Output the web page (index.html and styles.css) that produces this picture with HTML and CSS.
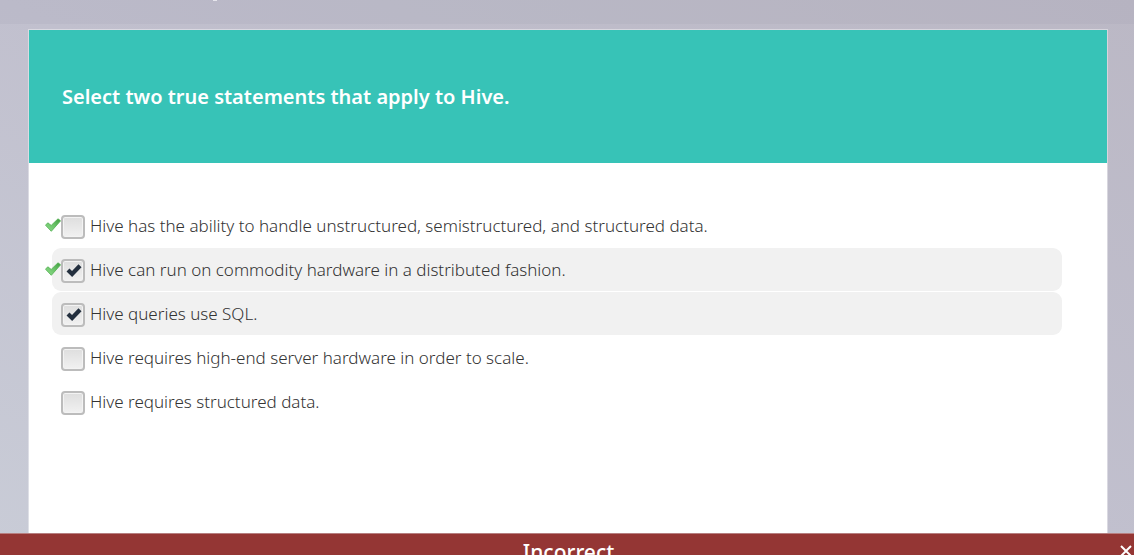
FILE: index.html
```html
<!DOCTYPE html>
<html lang="en">
<head>
<meta charset="utf-8">
<meta name="viewport" content="width=device-width, initial-scale=1">
<title>Hive quiz</title>
<link rel="stylesheet" href="styles.css">
</head>
<body>
<div class="page">
  <header class="topbar"><span class="topbar-mark"></span></header>
  <main class="card">
    <h1 class="question">Select two true statements that apply to Hive.</h1>
    <form class="answers">
      <div class="answer">
        <svg class="correct" viewBox="0 0 16 14" aria-hidden="true"><use href="#tick"/></svg>
        <input class="box" type="checkbox" id="a1"><label class="text" for="a1">Hive has the ability to handle unstructured, semistructured, and structured data.</label>
      </div>
      <div class="answer selected">
        <svg class="correct" viewBox="0 0 16 14" aria-hidden="true"><use href="#tick"/></svg>
        <span class="control"><input class="box" type="checkbox" id="a2" checked><svg class="check" viewBox="0 0 16 14" aria-hidden="true"><use href="#check"/></svg></span><label class="text" for="a2">Hive can run on commodity hardware in a distributed fashion.</label>
      </div>
      <div class="answer selected">
        <span class="control"><input class="box" type="checkbox" id="a3" checked><svg class="check" viewBox="0 0 16 14" aria-hidden="true"><use href="#check"/></svg></span><label class="text" for="a3">Hive queries use SQL.</label>
      </div>
      <div class="answer">
        <input class="box" type="checkbox" id="a4"><label class="text" for="a4">Hive requires high-end server hardware in order to scale.</label>
      </div>
      <div class="answer">
        <input class="box" type="checkbox" id="a5"><label class="text" for="a5">Hive requires structured data.</label>
      </div>
    </form>
  </main>
  <footer class="result">
    <span class="result-text">Incorrect</span>
    <button class="close" type="button" aria-label="Close"><svg class="close-icon" viewBox="0 0 12 12" aria-hidden="true"><path d="M1 1l10 10M11 1L1 11" stroke="#fff" stroke-width="2" fill="none"/></svg></button>
  </footer>
</div>
<svg class="symbols" aria-hidden="true">
  <defs>
    <linearGradient id="green" x1="0" y1="1" x2="1" y2="0">
      <stop offset="0" stop-color="#8fdc8c"/><stop offset="0.5" stop-color="#6cc56a"/><stop offset="1" stop-color="#3f9c3f"/>
    </linearGradient>
  </defs>
  <symbol id="tick" viewBox="0 0 16 14"><path d="M.5 7.2L2.8 4.8l3.4 2.6L13 .8l2.6 2L6.3 13.3z" fill="url(#green)" stroke="#4fae4e" stroke-width=".8" stroke-linejoin="round"/></symbol>
  <symbol id="check" viewBox="0 0 16 14"><path d="M2 7l4.1 4L14 2.8" fill="none" stroke="#232f3e" stroke-width="4.2"/></symbol>
</svg>
</body>
</html>
```
FILE: styles.css
```css
* {
  box-sizing: border-box;
}

body {
  margin: 0;
  font-family: "Noto Sans", "Open Sans", sans-serif;
  color: #333;
  overflow: hidden;
}

.page {
  display: flex;
  flex-direction: column;
  height: 100vh;
  background: linear-gradient(to top right, #c9ccd7, #c1c0ce 50%, #bbb8c5);
}

.topbar {
  flex: none;
  height: 24px;
  padding-left: 213px;
  background: rgba(150, 145, 165, 0.12);
}

.topbar-mark {
  display: block;
  width: 4px;
  height: 1px;
  background: #e6e5ec;
}

.card {
  flex: 1;
  margin: 6px 27px 0 29px;
  background: #fff;
  box-shadow: 0 0 0 1px rgba(255, 255, 255, 0.4);
}

.question {
  margin: 0;
  padding: 52px 33px 51px;
  background: #37c3b7;
  color: #fff;
  font-size: 20px;
  font-weight: 600;
  line-height: 30px;
}

.answers {
  display: flex;
  flex-direction: column;
  gap: 1px;
  padding: 41px 45px 0 23px;
}

.answer {
  position: relative;
  display: flex;
  align-items: center;
  gap: 5px;
  min-height: 43px;
  padding-left: 9px;
  border-radius: 9px;
}

.selected {
  background: #f1f1f1;
}

.correct {
  position: absolute;
  left: -7px;
  top: 14px;
  width: 16px;
  height: 14px;
}

.control {
  display: flex;
  position: relative;
}

.box {
  appearance: none;
  flex: none;
  width: 24px;
  height: 24px;
  margin: 2px 0 0;
  border: 2px solid #bcbcbc;
  border-radius: 4px;
  background: linear-gradient(#dedede, #f1f1f1);
  box-shadow: inset 0 0 0 1px #f3f3f3;
}

.check {
  position: absolute;
  left: 5px;
  top: 6px;
  width: 16px;
  height: 14px;
  pointer-events: none;
}

.text {
  font-size: 17px;
  font-weight: 300;
  line-height: 24px;
}

.result {
  position: relative;
  flex: none;
  height: 22px;
  padding-left: 3px;
  border-top: 1px solid #b77f80;
  background: #943634;
  color: #fff;
  text-align: center;
  overflow: hidden;
}

.result-text {
  font-size: 21px;
  font-weight: 500;
  line-height: 36px;
}

.close {
  position: absolute;
  top: 11px;
  right: 2px;
  display: flex;
  padding: 0;
  border: 0;
  background: none;
}

.close-icon {
  width: 12px;
  height: 12px;
}

.symbols {
  position: absolute;
  width: 0;
  height: 0;
}
```
